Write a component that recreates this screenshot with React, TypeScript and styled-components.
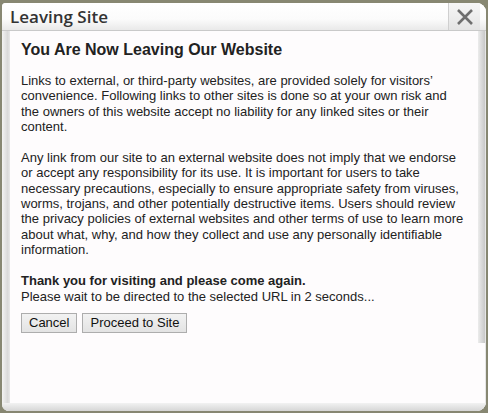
import React from "react";
import styled, { createGlobalStyle } from "styled-components";

const Global = createGlobalStyle`
  html, body { margin: 0; padding: 0; }
  body { background: #878772; width: 488px; height: 413px; overflow: hidden; }
`;

const Page = styled.div`
  width: 488px;
  height: 413px;
  padding: 3px 2px 2px 2px;
  box-sizing: border-box;
`;

const Dialog = styled.div`
  display: flex;
  flex-direction: column;
  width: 484px;
  height: 408px;
  background: #fefcfd;
  border-radius: 4px 9px 9px 7px;
  overflow: hidden;
  box-shadow: inset 0 0 0 1px #e6e6e6;
`;

const TitleBar = styled.div`
  display: flex;
  align-items: stretch;
  height: 27px;
  border-bottom: 1px solid #c9c9c9;
  background: linear-gradient(#ffffff 0%, #fbfbfb 60%, #e9e9e9 100%);
`;

const Title = styled.div`
  flex: 1;
  padding-left: 8px;
  display: flex;
  align-items: center;
  font-family: "Open Sans", "DejaVu Sans", sans-serif;
  font-weight: 600;
  font-size: 17px;
  color: #333;
`;

const Close = styled.button`
  width: 32px;
  margin-right: 6px;
  border: none;
  border-left: 1px solid #cfcfcf;
  background: linear-gradient(#f6f6f6, #e4e4e4);
  display: flex;
  align-items: center;
  justify-content: center;
  padding: 0;
`;

const Body = styled.div`
  flex: 1;
  display: flex;
`;

const LeftEdge = styled.div`
  width: 8px;
  background: linear-gradient(90deg, #f3f3f3, #d9d9d9 70%, #e8e8e8);
`;

const RightEdge = styled.div`
  width: 7px;
  height: 312px;
  margin-right: 1px;
  background: linear-gradient(90deg, #ececec, #d6d6d6 60%, #c9c9c9);
`;

const Content = styled.div`
  flex: 1;
  padding: 9px 11px 0 11px;
  font-family: "Liberation Sans", Arial, sans-serif;
  font-size: 13px;
  line-height: 15.3px;
  color: #222;
`;

const BottomEdge = styled.div`
  height: 8px;
  background: linear-gradient(#f2f2f2, #d6d6d6);
  border-radius: 0 0 9px 7px;
`;

const Heading = styled.h2`
  margin: 0 0 13px 0;
  font-size: 16px;
  line-height: 20px;
  font-weight: bold;
  color: #222;
`;

const Para = styled.p`
  margin: 0 0 16px 0;
`;

const Strong = styled.strong`
  font-weight: bold;
`;

const Buttons = styled.div`
  display: flex;
  gap: 5px;
  margin-top: 9px;
`;

const Btn = styled.button`
  font-family: "Liberation Sans", Arial, sans-serif;
  font-size: 13px;
  color: #111;
  height: 20px;
  padding: 0 7px;
  border: 1px solid #adadad;
  background: linear-gradient(#f2f2f2, #e3e3e3);
  border-radius: 0;
`;

export default function App() {
  return (
    <>
      <Global />
      <Page>
        <Dialog>
          <TitleBar>
            <Title>Leaving Site</Title>
            <Close aria-label="Close">
              <svg width="18" height="18" viewBox="0 0 18 18">
                <path d="M2 2 L16 16 M16 2 L2 16" stroke="#6f6f6f" strokeWidth="2.6" />
              </svg>
            </Close>
          </TitleBar>
          <Body>
            <LeftEdge />
            <Content>
              <Heading>You Are Now Leaving Our Website</Heading>
              <Para>
                Links to external, or third-party websites, are provided solely for visitors’
                convenience. Following links to other sites is done so at your own risk and
                the owners of this website accept no liability for any linked sites or their
                content.
              </Para>
              <Para>
                Any link from our site to an external website does not imply that we endorse
                or accept any responsibility for its use. It is important for users to take
                necessary precautions, especially to ensure appropriate safety from viruses,
                worms, trojans, and other potentially destructive items. Users should review
                the privacy policies of external websites and other terms of use to learn more
                about what, why, and how they collect and use any personally identifiable
                information.
              </Para>
              <div>
                <Strong>Thank you for visiting and please come again.</Strong>
                <br />
                Please wait to be directed to the selected URL in 2 seconds...
              </div>
              <Buttons>
                <Btn>Cancel</Btn>
                <Btn>Proceed to Site</Btn>
              </Buttons>
            </Content>
            <RightEdge />
          </Body>
          <BottomEdge />
        </Dialog>
      </Page>
    </>
  );
}
